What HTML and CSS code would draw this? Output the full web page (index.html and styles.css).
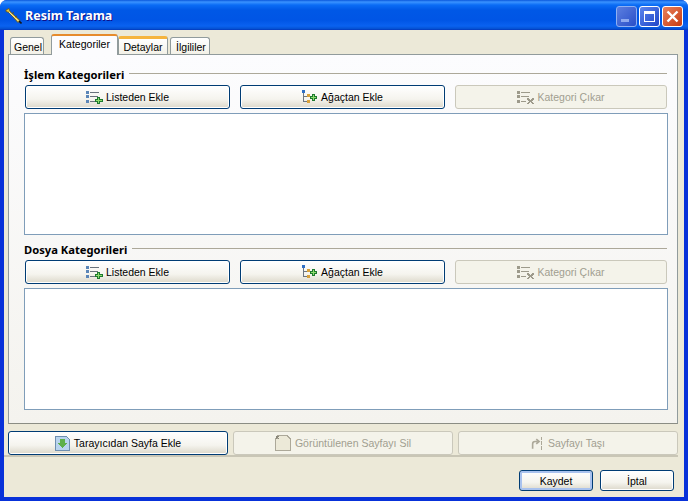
FILE: index.html
```html
<!DOCTYPE html>
<html lang="tr">
<head>
<meta charset="utf-8">
<title>Resim Tarama</title>
<link rel="stylesheet" href="styles.css">
</head>
<body>
<svg class="defs" width="0" height="0">
  <defs>
    <symbol id="i-list" viewBox="0 0 17 13">
      <g shape-rendering="crispEdges">
        <rect x="0" y="0" width="3" height="3" fill="#5b86b8"/><rect x="0" y="4" width="3" height="3" fill="#5b86b8"/><rect x="0" y="9" width="3" height="3" fill="#5b86b8"/>
        <rect x="4" y="1" width="9" height="1" fill="#69727c"/><rect x="4" y="5" width="8" height="1" fill="#69727c"/><rect x="4" y="10" width="5" height="1" fill="#69727c"/>
      </g>
      <path shape-rendering="crispEdges" d="M11 6h3v2h3v3h-3v2h-3v-2H9V8h2z" fill="#1d7a2e"/>
      <path shape-rendering="crispEdges" d="M12 7h1v2h3v1h-3v2h-1v-2h-2V9h2z" fill="#8fdc6e"/>
    </symbol>
    <symbol id="i-tree" viewBox="0 0 15 14">
      <g shape-rendering="crispEdges">
        <rect x="0" y="0" width="3" height="3" fill="#2f6fc4"/>
        <rect x="1" y="3" width="1" height="9" fill="#6d7680"/><rect x="2" y="6" width="3" height="1" fill="#6d7680"/><rect x="2" y="11" width="3" height="1" fill="#6d7680"/>
        <rect x="5" y="4" width="3" height="3" fill="#d8a23c"/><rect x="5" y="10" width="3" height="3" fill="#d8a23c"/>
      </g>
      <path shape-rendering="crispEdges" d="M10 4h3v2h2v3h-2v2h-3V9H8V6h2z" fill="#1d7a2e"/>
      <path shape-rendering="crispEdges" d="M11 5h1v2h2v1h-2v2h-1V8H9V7h2z" fill="#8fdc6e"/>
    </symbol>
    <symbol id="i-remove" viewBox="0 0 17 13">
      <g shape-rendering="crispEdges" fill="#9d9a8b">
        <rect x="0" y="0" width="3" height="3"/><rect x="0" y="4" width="3" height="3"/><rect x="0" y="9" width="3" height="3"/>
        <rect x="4" y="1" width="9" height="1"/><rect x="4" y="5" width="8" height="1"/><rect x="4" y="10" width="5" height="1"/>
        <path d="M10 7h2v1h1v1h1V8h1V7h2v2h-1v1h-1v1h1v1h1v1h-2v-1h-1v-1h-1v1h-1v1h-2v-1h1v-1h1v-1h-1V9h-1z"/>
      </g>
    </symbol>
  </defs>
</svg>
<div class="window">
  <header class="titlebar">
    <svg class="app-icon" width="17" height="16" viewBox="0 0 17 16">
      <path d="M1 2l3-1.500 1 3 10 9-2 2-9-10-3-1z" fill="#e6c63e" stroke="#6b5614" stroke-width=".8"/>
      <path d="M4 4l9.500 9" stroke="#fff3ad" stroke-width="1"/>
      <path d="M7 5.500l2-1M10 9l2-1" stroke="#6b5614" stroke-width="1"/>
      <path d="M14 13l2.500 2.500" stroke="#151515" stroke-width="1.600"/>
    </svg>
    <span class="title">Resim Tarama</span>
    <div class="controls">
      <div class="ctl ctl-min"><span class="glyph-min"></span></div>
      <div class="ctl ctl-max"><span class="glyph-max"></span></div>
      <div class="ctl ctl-close">
        <svg width="13" height="13" viewBox="0 0 13 13"><path d="M1.500 1.500l10 10M11.500 1.500l-10 10" stroke="#fff" stroke-width="2.400"/></svg>
      </div>
    </div>
  </header>
  <div class="client">
    <nav class="tabs">
      <div class="tab tab-genel">Genel</div>
      <div class="tab tab-active">Kategoriler</div>
      <div class="tab tab-hot">Detaylar</div>
      <div class="tab tab-ilgili">İlgililer</div>
    </nav>
    <main class="panel">
      <section class="group group-first">
        <div class="legend"><span class="legend-text">İşlem Kategorileri</span><span class="legend-line"></span></div>
        <div class="btn-row">
          <button class="btn"><svg class="ic" width="17" height="13"><use href="#i-list"/></svg>Listeden Ekle</button>
          <button class="btn btn-tree"><svg class="ic" width="15" height="14"><use href="#i-tree"/></svg>Ağaçtan Ekle</button>
          <button class="btn btn-off btn-wide"><svg class="ic" width="17" height="13"><use href="#i-remove"/></svg>Kategori Çıkar</button>
        </div>
        <div class="listbox"></div>
      </section>
      <section class="group group-second">
        <div class="legend"><span class="legend-text">Dosya Kategorileri</span><span class="legend-line"></span></div>
        <div class="btn-row">
          <button class="btn"><svg class="ic" width="17" height="13"><use href="#i-list"/></svg>Listeden Ekle</button>
          <button class="btn btn-tree"><svg class="ic" width="15" height="14"><use href="#i-tree"/></svg>Ağaçtan Ekle</button>
          <button class="btn btn-off btn-wide"><svg class="ic" width="17" height="13"><use href="#i-remove"/></svg>Kategori Çıkar</button>
        </div>
        <div class="listbox"></div>
      </section>
    </main>
    <div class="page-actions">
      <button class="btn btn-page">
        <svg class="ic" width="15" height="15" viewBox="0 0 15 15">
          <path shape-rendering="crispEdges" d="M.5.5h11l3 3v11H.5z" fill="#b9d4ee" stroke="#6f8fb0"/>
          <path shape-rendering="crispEdges" d="M5 3h5v4h2.500L7.500 12.500 2.500 7H5z" fill="#5eb04a"/>
        </svg>Tarayıcıdan Sayfa Ekle
      </button>
      <button class="btn btn-off btn-page">
        <svg class="ic" width="16" height="16" viewBox="0 0 15 15">
          <path shape-rendering="crispEdges" d="M.5 3.500h2v-3h9l3 3v11H.500z" fill="#ece9d8" stroke="#aca899"/>
          <path shape-rendering="crispEdges" d="M1 1h3v1H3v1h1v1H3V3H2v1H1z" fill="#8a877a"/>
        </svg>Görüntülenen Sayfayı Sil
      </button>
      <button class="btn btn-off btn-page">
        <svg class="ic" width="13" height="15" viewBox="0 0 16 17">
          <path d="M2 15V9q0-3 3-3h3M6.500 3l3.500 3-3.500 3" fill="none" stroke="#aca899" stroke-width="2"/>
          <path shape-rendering="crispEdges" d="M12 0h2v4h-2zM12 6h2v4h-2zM12 12h2v4h-2z" fill="#aca899"/>
        </svg>Sayfayı Taşı
      </button>
    </div>
    <footer class="footer">
      <button class="btn btn-foot btn-default">Kaydet</button>
      <button class="btn btn-foot">İptal</button>
    </footer>
  </div>
</div>
</body>
</html>
```

FILE: styles.css
```css
* { box-sizing: border-box; }
html, body { margin: 0; padding: 0; }
body {
  width: 688px;
  height: 501px;
  overflow: hidden;
  font-family: "Liberation Sans", Arial, sans-serif;
  font-size: 10.500px;
  color: #000;
}
.defs { position: absolute; }
.window {
  width: 688px;
  height: 501px;
  display: flex;
  flex-direction: column;
  background: #0831d9;
  border-radius: 7px 7px 0 0;
  overflow: hidden;
}
.titlebar {
  height: 30px;
  flex: none;
  display: flex;
  align-items: center;
  padding: 0 5px 0 5px;
  background: linear-gradient(180deg, #0a58dc 0, #3a93ff 2px, #0a6cf5 5px, #0058e6 10px, #0055e5 20px, #0a62f0 26px, #0450d0 29px, #0331b8 30px);
}
.app-icon { flex: none; margin-right: 3px; margin-top: 1px; }
.title {
  color: #fff;
  font-family: "Noto Sans", sans-serif;
  font-weight: 700;
  font-size: 12.500px;
  text-shadow: 1px 1px 0 #0f1089;
  flex: 1;
}
.controls { display: flex; gap: 2px; margin-top: 3px; }
.ctl {
  width: 21px;
  height: 21px;
  border: 1px solid #fff;
  border-radius: 3px;
  display: flex;
  align-items: center;
  justify-content: center;
}
.ctl-min {
  background: linear-gradient(135deg, #5c7fe0, #2a4fc8);
  border-color: #8fb0f2;
}
.ctl-max { background: linear-gradient(135deg, #5c86ee, #1f45c8); }
.ctl-close { background: linear-gradient(135deg, #e8805c, #c83c12); }
.glyph-min { width: 8px; height: 3px; background: #8ea9ee; margin-top: 8px; margin-right: 3px; }
.glyph-max { width: 11px; height: 11px; border: 1px solid #fff; border-top-width: 3px; }
.client {
  flex: 1;
  margin: 0 4px 4px;
  background: #ece9d8;
  display: flex;
  flex-direction: column;
  padding: 4px 0 0 4px;
}
.tabs {
  display: flex;
  align-items: flex-end;
  height: 20px;
  padding-left: 2px;
  position: relative;
  z-index: 1;
}
.tab {
  height: 17px;
  border: 1px solid #919b9c;
  border-bottom: 0;
  border-radius: 3px 3px 0 0;
  background: linear-gradient(180deg, #fff, #f3f1e7);
  display: flex;
  align-items: center;
  justify-content: center;
  padding-top: 1px;
}
.tab-genel { width: 34px; margin-right: 7px; padding-left: 2px; }
.tab-active {
  width: 67px;
  height: 21px;
  background: #fcfcfe;
  border-top: 2px solid #e68b2c;
  margin: 0 0 -1px;
  padding: 0 0 4px;
}
.tab-hot { width: 50px; margin-right: 2px; border-top: 3px solid #f5b43e; height: 18px; padding-top: 0; }
.tab-ilgili { width: 40px; padding-left: 2px; }
.panel {
  width: 670px;
  height: 370px;
  flex: none;
  border: 1px solid #919b9c;
  border-bottom-color: #8b8d84;
  background: linear-gradient(180deg, #fcfcfe 0, #f4f3ee 100%);
  padding: 0 10px 0 15px;
}
.group-first { padding-top: 10px; }
.group-second { padding-top: 5px; }
.legend {
  display: flex;
  align-items: center;
  height: 20px;
}
.legend-text {
  font-family: "Noto Sans", sans-serif;
  font-weight: 700;
  font-size: 11.200px;
  margin-right: 5px;
  margin-bottom: 2px;
  white-space: nowrap;
}
.legend-line { flex: 1; height: 1px; background: #aca899; margin-bottom: 4px; }
.btn-row {
  display: flex;
  gap: 10px;
  padding-left: 1px;
}
.btn {
  width: 205px;
  height: 24px;
  padding: 0;
  font: inherit;
  color: #000;
  border: 1px solid #003c74;
  border-radius: 3px;
  background: linear-gradient(180deg, #fff 0, #f5f4ee 60%, #dcd8ca 100%);
  display: flex;
  align-items: center;
  justify-content: center;
  gap: 3px;
  box-shadow: inset 0 0 0 1px #fff;
}
.btn-tree { gap: 4px; }
.btn-off {
  background: #f4f3ea;
  border-color: #cac8bb;
  color: #a19e90;
  box-shadow: none;
}
.btn-wide { width: 212px; }
.ic { flex: none; }
.listbox {
  height: 122px;
  margin-top: 4px;
  background: #fff;
  border: 1px solid #7f9db9;
  width: 644px;
}
.page-actions {
  display: flex;
  gap: 5px;
  padding: 7px 0 0 0;
  margin-right: 6px;
  height: 33px;
  flex: none;
  border-bottom: 2px solid #c9c6b6;
  margin-left: -4px;
  padding-left: 4px;
}
.btn-page { width: 220px; height: 24px; gap: 4px; }
.footer {
  display: flex;
  justify-content: flex-end;
  gap: 7px;
  padding: 13px 10px 0 0;
}
.btn-foot { width: 74px; height: 21px; }
.btn-default { box-shadow: inset 0 0 0 2px #a9c2ee; }
```
